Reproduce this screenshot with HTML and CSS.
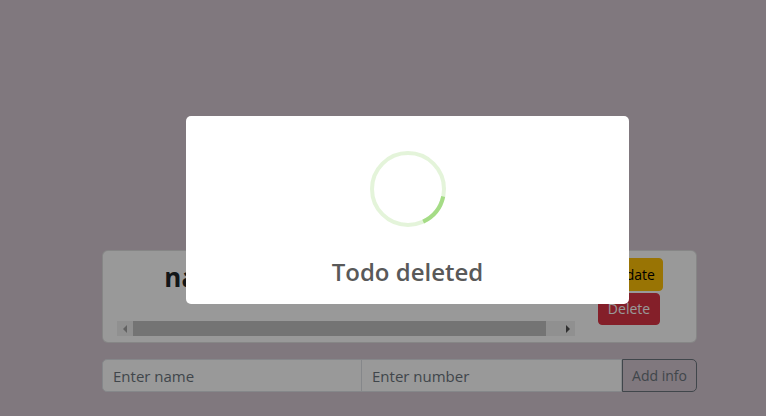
FILE: index.html
```html
<!DOCTYPE html>
<html lang="en">
<head>
<meta charset="utf-8">
<title>Todo</title>
<link rel="stylesheet" href="styles.css">
</head>
<body>
<main class="page">
  <section class="card">
    <div class="table-wrap">
      <div class="scroll-box">
        <table class="info-table">
          <thead>
            <tr><th class="col-name">name</th><th class="col-rest"></th></tr>
          </thead>
        </table>
      </div>
      <div class="scrollbar" aria-hidden="true">
        <span class="sb-btn">
          <svg width="4" height="8" viewBox="0 0 4 8"><polygon points="4,0 4,8 0,4" fill="#a3a3a3"/></svg>
        </span>
        <span class="sb-track"><span class="sb-thumb"></span></span>
        <span class="sb-btn">
          <svg width="4" height="8" viewBox="0 0 4 8"><polygon points="0,0 0,8 4,4" fill="#505050"/></svg>
        </span>
      </div>
    </div>
    <div class="actions">
      <button class="btn btn-warning">Update</button>
      <button class="btn btn-danger">Delete</button>
    </div>
  </section>
  <form class="input-group">
    <input class="field" type="text" placeholder="Enter name">
    <input class="field" type="text" placeholder="Enter number">
    <button type="button" class="btn-outline">Add info</button>
  </form>
</main>

<div class="overlay">
  <div class="popup" role="dialog">
    <svg class="loader" width="80" height="80" viewBox="0 0 80 80">
      <circle cx="40" cy="40" r="36" fill="none" stroke="rgba(165,220,134,0.3)" stroke-width="4"/>
      <path d="M75.2 47.5 A36 36 0 0 1 55.2 72.6" fill="none" stroke="#a5dc86" stroke-width="4"/>
    </svg>
    <h2 class="title">Todo deleted</h2>
  </div>
</div>
</body>
</html>
```

FILE: styles.css
```css
* { box-sizing: border-box; }
html, body { margin: 0; height: 100%; overflow: hidden; }
body {
  background: rgb(213, 200, 210);
  font-family: "Open Sans", "Noto Sans", sans-serif;
  color: #212529;
}
.page {
  width: 595px;
  margin-left: 102px;
  padding-top: 250px;
}
.card {
  display: flex;
  align-items: flex-start;
  background: #fff;
  border: 1px solid rgba(0,0,0,0.12);
  border-radius: 6px;
  height: 93px;
  padding: 7px 33px 0 14px;
}
.table-wrap {
  width: 458px;
  display: flex;
  flex-direction: column;
}
.scroll-box {
  height: 63px;
  overflow: hidden;
}
.info-table {
  width: 475px;
  border-collapse: collapse;
}
.info-table th {
  font-size: 26px;
  font-weight: 700;
  line-height: 1.2;
  padding: 4px 0;
}
.col-name {
  width: 131px;
  text-align: right;
  padding-right: 10px !important;
}
.scrollbar {
  display: flex;
  height: 15px;
  background: #f1f1f1;
}
.sb-btn {
  width: 15px;
  display: flex;
  align-items: center;
  justify-content: center;
}
.sb-track {
  flex: 1;
  display: flex;
  padding: 0 14px 0 1px;
}
.sb-thumb {
  flex: 1;
  background: #c1c1c1;
}
.actions {
  margin-left: auto;
  display: flex;
  flex-direction: column;
  align-items: flex-start;
  gap: 2px;
}
.btn {
  font-family: inherit;
  font-size: 14px;
  height: 33px;
  padding: 0 8px;
  border: 1px solid transparent;
  border-radius: 4px;
  line-height: 1;
}
.btn-warning { background: #ffc107; border-color: #ffc107; color: #000; width: 65px; }
.btn-danger { background: #dc3545; border-color: #dc3545; color: #fff; width: 62px; height: 32px; }
.input-group {
  display: flex;
  margin-top: 16px;
  height: 33px;
}
.field {
  width: 260px;
  font-family: inherit;
  font-size: 15px;
  padding: 0 10px;
  border: 1px solid #dee2e6;
  background: #fff;
  color: #212529;
}
.field:first-child { border-radius: 5px 0 0 5px; }
.field + .field { border-left: none; }
.field::placeholder { color: #6c757d; }
.btn-outline {
  width: 75px;
  font-family: inherit;
  font-size: 14px;
  background: transparent;
  color: #6c757d;
  border: 1px solid #6c757d;
  border-radius: 0 5px 5px 0;
}
.overlay {
  position: fixed;
  inset: 0;
  background: rgba(0, 0, 0, 0.4);
  display: flex;
  align-items: center;
  justify-content: center;
  padding: 4px 0 0 49px;
}
.popup {
  width: 443px;
  height: 188px;
  background: #fff;
  border-radius: 5px;
  display: flex;
  flex-direction: column;
  align-items: center;
  padding-top: 33px;
}
.loader { display: block; }
.title {
  margin: 29px 0 0;
  font-size: 24px;
  font-weight: 600;
  color: #595959;
  line-height: 1.2;
}
```
